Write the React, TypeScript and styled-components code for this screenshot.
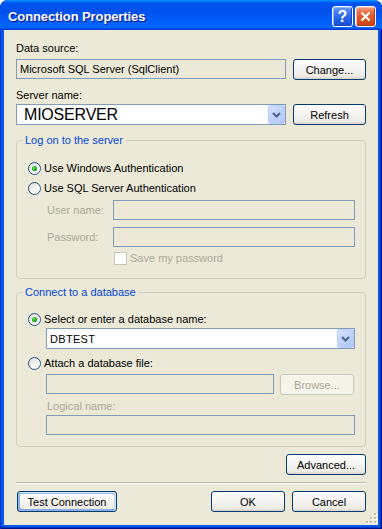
import React, { useId } from "react";
import styled, { createGlobalStyle } from "styled-components";

const GlobalStyle = createGlobalStyle`
  html, body {
    margin: 0;
    padding: 0;
    background: #ffffff;
  }
  body {
    font-family: "Liberation Sans", Arial, sans-serif;
    font-size: 11px;
    color: #000;
  }
  * {
    box-sizing: border-box;
  }
`;

const Window = styled.div`
  width: 382px;
  height: 529px;
  display: flex;
  flex-direction: column;
  border-radius: 8px 8px 0 0;
  overflow: hidden;
  background: #0757e8;
  box-shadow: inset 1px 0 #0831d9, inset -1px -1px #00138c, inset -2px -2px #0035c8;
`;

const TitleBar = styled.div`
  flex: none;
  height: 30px;
  display: flex;
  align-items: center;
  gap: 2px;
  padding: 3px 6px 0 8px;
  border-radius: 8px 8px 0 0;
  background: linear-gradient(
    180deg,
    #0997ff,
    #0053ee 10%,
    #0050ee 40%,
    #0066ff 86%,
    #0066ff 92%,
    #005bff 94%,
    #003dd7 96%,
    #003dd7
  );
`;

const Title = styled.div`
  flex: 1;
  color: #fff;
  font-weight: bold;
  font-size: 13px;
  letter-spacing: -0.1px;
  text-shadow: 1px 1px #0f1089;
`;

const CaptionButton = styled.div<{ $kind: "help" | "close" }>`
  width: 21px;
  height: 21px;
  border: 1px solid #fff;
  border-radius: 3px;
  display: flex;
  align-items: center;
  justify-content: center;
  color: #fff;
  font-weight: bold;
  font-size: 16px;
  background: ${({ $kind }) =>
    $kind === "help"
      ? "linear-gradient(180deg, #6d9cf7 0%, #3a74ef 35%, #2159e3 70%, #1c4fd6 100%)"
      : "linear-gradient(180deg, #f3a285 0%, #e66a3f 30%, #d9501f 70%, #c84519 100%)"};
  box-shadow: ${({ $kind }) =>
    $kind === "help"
      ? "inset -1px -1px #1745b8, inset 1px 1px #8fb4fb"
      : "inset -1px -1px #a9381a, inset 1px 1px #f6b8a0"};
`;

const Body = styled.div`
  flex: 1;
  position: relative;
  margin: 0 4px 4px;
  padding: 12px 12px 0;
  display: flex;
  flex-direction: column;
  background: #ece9d8;
`;

const Label = styled.div<{ $top?: number; $indent?: number; $disabled?: boolean }>`
  height: 13px;
  line-height: 13px;
  white-space: nowrap;
  margin-top: ${({ $top }) => $top ?? 0}px;
  padding-left: ${({ $indent }) => $indent ?? 0}px;
  color: ${({ $disabled }) => ($disabled ? "#aca899" : "#000")};
`;

const Row = styled.div<{ $top?: number; $indent?: number; $gap?: number }>`
  display: flex;
  align-items: flex-start;
  gap: ${({ $gap }) => $gap ?? 7}px;
  margin-top: ${({ $top }) => $top ?? 0}px;
  padding-left: ${({ $indent }) => $indent ?? 0}px;
`;

const FieldRow = styled.div<{ $top?: number }>`
  display: flex;
  align-items: center;
  margin-top: ${({ $top }) => $top ?? 0}px;
  padding-left: 19px;
`;

const FieldCaption = styled.div`
  width: 66px;
  color: #aca899;
  white-space: nowrap;
`;

const TextBox = styled.div<{ $width?: number; $filled?: boolean }>`
  height: 20px;
  flex: ${({ $width }) => ($width ? `0 0 ${$width}px` : "1")};
  border: 1px solid #7f9db9;
  background: ${({ $filled }) => ($filled ? "#fff" : "#ece9d8")};
  padding: 0 3px;
  line-height: 18px;
  white-space: nowrap;
  overflow: hidden;
`;

const Combo = styled.div<{ $width?: number }>`
  height: 21px;
  flex: ${({ $width }) => ($width ? `0 0 ${$width}px` : "1")};
  display: flex;
  border: 1px solid #7f9db9;
  background: #fff;
`;

const ComboText = styled.div<{ $big?: boolean }>`
  flex: 1;
  display: flex;
  align-items: center;
  padding-left: ${({ $big }) => ($big ? 7 : 3)}px;
  font-size: ${({ $big }) => ($big ? 16 : 11)}px;
  letter-spacing: ${({ $big }) => ($big ? "-0.2px" : "0.3px")};
  white-space: nowrap;
`;

const ArrowButton = styled.div`
  width: 17px;
  display: flex;
  align-items: center;
  justify-content: center;
  border: 1px solid #b9cdfa;
  border-radius: 2px;
  background: linear-gradient(135deg, #d6e2fd 0%, #c2d3fc 45%, #b1c6f9 100%);
`;

const Button = styled.button<{ $width: number; $isDefault?: boolean }>`
  flex: none;
  width: ${({ $width }) => $width}px;
  height: 21px;
  padding: 0;
  border: 1px solid #003c74;
  border-radius: 3px;
  font-family: "Liberation Sans", Arial, sans-serif;
  font-size: 11px;
  color: #000;
  background: linear-gradient(180deg, #fff, #ecebe6 86%, #d6d0c5);
  box-shadow: ${({ $isDefault }) =>
    $isDefault
      ? "inset -1px 1px #cee7ff, inset 1px 2px #98b8ea, inset -2px 2px #bcd4f6, inset 1px -1px #89ade4, inset 2px -2px #89ade4"
      : "none"};

  &:disabled {
    border-color: #cac8bb;
    background: #f5f4ea;
    color: #aca899;
  }
`;

const Group = styled.fieldset<{ $top: number; $padTop: number; $padBottom: number }>`
  margin: ${({ $top }) => $top}px 0 0;
  padding: ${({ $padTop }) => $padTop}px 10px ${({ $padBottom }) => $padBottom}px 11px;
  min-width: 0;
  border: 1px solid #d0d0bf;
  border-radius: 4px;
`;

const Legend = styled.legend`
  height: 13px;
  line-height: 13px;
  margin-left: -5px;
  padding: 0 2px;
  color: #0046d5;
`;

const GroupBody = styled.div`
  display: flex;
  flex-direction: column;
`;

const Option = styled.div<{ $top?: number; $indent?: number; $disabled?: boolean }>`
  display: flex;
  align-items: center;
  gap: 3px;
  height: 13px;
  line-height: 13px;
  white-space: nowrap;
  margin-top: ${({ $top }) => $top ?? 0}px;
  padding-left: ${({ $indent }) => $indent ?? 0}px;
  color: ${({ $disabled }) => ($disabled ? "#aca899" : "#000")};
`;

const Separator = styled.div`
  height: 2px;
  margin-top: 7px;
  border-top: 1px solid #bcb9a8;
  border-bottom: 1px solid #fff;
`;

const Footer = styled.div`
  display: flex;
  gap: 7px;
  margin-top: 7px;
  padding-left: 1px;
`;

const Spacer = styled.div`
  flex: 1;
`;

const Grip = styled.svg`
  position: absolute;
  right: 1px;
  bottom: 1px;
`;

function Radio({ checked }: { checked?: boolean }) {
  const id = useId().replace(/:/g, "");
  return (
    <svg width="13" height="13" viewBox="0 0 13 13">
      <defs>
        <linearGradient id={`rb${id}`} x1="0" y1="0" x2="1" y2="1">
          <stop offset="0" stopColor="#dcd9cf" />
          <stop offset="0.7" stopColor="#fff" />
          <stop offset="1" stopColor="#fff" />
        </linearGradient>
        <radialGradient id={`rd${id}`} cx="0.4" cy="0.4" r="0.6">
          <stop offset="0" stopColor="#5ee25e" />
          <stop offset="1" stopColor="#159715" />
        </radialGradient>
      </defs>
      <circle cx="6.5" cy="6.5" r="6" fill={`url(#rb${id})`} stroke="#1c5180" />
      {checked && <circle cx="6.5" cy="6.5" r="2.6" fill={`url(#rd${id})`} />}
    </svg>
  );
}

function Check() {
  return (
    <svg width="13" height="13" viewBox="0 0 13 13">
      <rect x="0.5" y="0.5" width="12" height="12" fill="#fff" stroke="#cac8bb" />
    </svg>
  );
}

function ComboArrow() {
  return (
    <ArrowButton>
      <svg width="9" height="6" viewBox="0 0 9 6">
        <path d="M1 1 L4.5 4.5 L8 1" fill="none" stroke="#4d6185" strokeWidth="2" />
      </svg>
    </ArrowButton>
  );
}

export default function App() {
  return (
    <>
      <GlobalStyle />
      <Window>
        <TitleBar>
          <Title>Connection Properties</Title>
          <CaptionButton $kind="help">?</CaptionButton>
          <CaptionButton $kind="close">
            <svg width="11" height="11" viewBox="0 0 11 11">
              <path d="M1.5 1.5 L9.5 9.5 M9.5 1.5 L1.5 9.5" stroke="#fff" strokeWidth="2.2" />
            </svg>
          </CaptionButton>
        </TitleBar>

        <Body>
          <Label>Data source:</Label>
          <Row $top={4}>
            <TextBox $width={270}>Microsoft SQL Server (SqlClient)</TextBox>
            <Button $width={73}>Change...</Button>
          </Row>

          <Label $top={9}>Server name:</Label>
          <Row $top={2}>
            <Combo $width={270}>
              <ComboText $big>MIOSERVER</ComboText>
              <ComboArrow />
            </Combo>
            <Button $width={73}>Refresh</Button>
          </Row>

          <Group $top={9} $padTop={15} $padBottom={13}>
            <Legend>Log on to the server</Legend>
            <GroupBody>
              <Option>
                <Radio checked />
                Use Windows Authentication
              </Option>
              <Option $top={7}>
                <Radio />
                Use SQL Server Authentication
              </Option>
              <FieldRow $top={5}>
                <FieldCaption>User name:</FieldCaption>
                <TextBox />
              </FieldRow>
              <FieldRow $top={7}>
                <FieldCaption>Password:</FieldCaption>
                <TextBox />
              </FieldRow>
              <Option $top={5} $indent={86} $disabled>
                <Check />
                Save my password
              </Option>
            </GroupBody>
          </Group>

          <Group $top={7} $padTop={14} $padBottom={11}>
            <Legend>Connect to a database</Legend>
            <GroupBody>
              <Option>
                <Radio checked />
                Select or enter a database name:
              </Option>
              <Row $top={2} $indent={18}>
                <Combo>
                  <ComboText>DBTEST</ComboText>
                  <ComboArrow />
                </Combo>
              </Row>
              <Option $top={8}>
                <Radio />
                Attach a database file:
              </Option>
              <Row $top={4} $indent={18} $gap={6}>
                <TextBox $width={228} />
                <Button $width={74} disabled>
                  Browse...
                </Button>
              </Row>
              <Label $top={5} $indent={19} $disabled>
                Logical name:
              </Label>
              <Row $top={2} $indent={18}>
                <TextBox />
              </Row>
            </GroupBody>
          </Group>

          <Row $top={7}>
            <Spacer />
            <Button $width={80}>Advanced...</Button>
          </Row>

          <Separator />

          <Footer>
            <Button $width={100} $isDefault>
              Test Connection
            </Button>
            <Spacer />
            <Button $width={74}>OK</Button>
            <Button $width={74}>Cancel</Button>
          </Footer>

          <Grip width="12" height="12" viewBox="0 0 12 12">
            {[
              [9, 1],
              [5, 5],
              [9, 5],
              [1, 9],
              [5, 9],
              [9, 9],
            ].map(([x, y]) => (
              <g key={`${x}-${y}`}>
                <rect x={x + 1} y={y + 1} width="2" height="2" fill="#fff" />
                <rect x={x} y={y} width="2" height="2" fill="#c1bdab" />
              </g>
            ))}
          </Grip>
        </Body>
      </Window>
    </>
  );
}
